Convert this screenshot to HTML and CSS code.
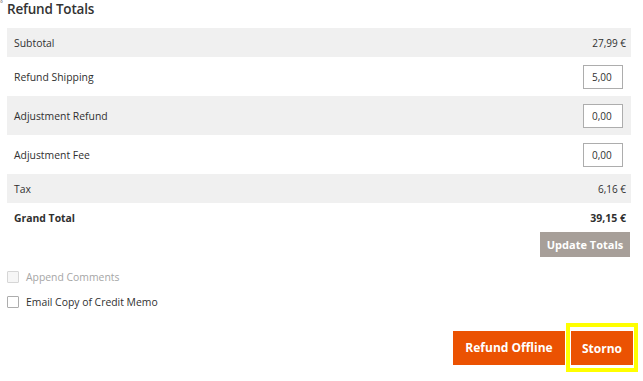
FILE: index.html
```html
<!DOCTYPE html>
<html>
<head>
<meta charset="utf-8">
<link rel="stylesheet" href="styles.css">
</head>
<body>
<div class="page">
  <span class="corner-mark">°</span>
  <h2 class="title">Refund Totals</h2>
  <div class="totals">
    <div class="row shaded short"><span>Subtotal</span><span class="val">27,99 €</span></div>
    <div class="row tall"><span>Refund Shipping</span><input class="amt" value="5,00"></div>
    <div class="row shaded tall"><span>Adjustment Refund</span><input class="amt" value="0,00"></div>
    <div class="row tall"><span>Adjustment Fee</span><input class="amt" value="0,00"></div>
    <div class="row shaded short"><span>Tax</span><span class="val">6,16 €</span></div>
    <div class="row short grand"><span>Grand Total</span><span class="val">39,15 €</span></div>
  </div>
  <div class="update-wrap"><button class="btn-update">Update Totals</button></div>
  <div class="checks">
    <label class="check disabled"><span class="box"></span>Append Comments</label>
    <label class="check"><span class="box"></span>Email Copy of Credit Memo</label>
  </div>
  <div class="actions">
    <button class="btn-primary">Refund Offline</button>
    <span class="highlight"><button class="btn-primary">Storno</button></span>
  </div>
</div>
</body>
</html>
```
FILE: styles.css
```css
* { box-sizing: border-box; }
body {
  margin: 0;
  background: #fff;
  font-family: "Open Sans", "Noto Sans", sans-serif;
  color: #303030;
}
.page {
  position: relative;
  padding-left: 7px;
  width: 631px;
}
.corner-mark {
  position: absolute;
  left: 0;
  top: 0;
  font-size: 7px;
  line-height: 7px;
  color: #555;
}
.title {
  margin: 0;
  font-size: 13.5px;
  line-height: 18px;
  font-weight: 600;
  letter-spacing: -0.2px;
  color: #333;
  height: 28px;
}
.totals { display: flex; flex-direction: column; }
.row {
  display: flex;
  align-items: center;
  justify-content: space-between;
  padding: 0 5px 0 7px;
  font-size: 10.4px;
}
.row.short { height: 29px; }
.row.tall { height: 39px; }
.row.shaded { background: #f0f0f0; }
.row.grand { font-weight: 700; }
.val { font-size: 10px; }
.grand .val { font-size: 10.5px; }
.amt {
  width: 40px;
  height: 24px;
  margin-right: 3px;
  border: 1px solid #adadad;
  background: #fff;
  font-family: inherit;
  font-size: 10px;
  color: #303030;
  padding: 0 0 0 8px;
  outline: none;
}
.update-wrap { display: flex; justify-content: flex-end; }
.btn-update {
  width: 90px;
  height: 25px;
  margin-right: 1px;
  border: none;
  background: #a79f99;
  color: #fff;
  font-family: inherit;
  font-size: 11px;
  font-weight: 700;
  padding: 0;
  white-space: nowrap;
}
.checks {
  display: flex;
  flex-direction: column;
  gap: 12px;
  margin-top: 13px;
}
.check {
  display: flex;
  align-items: center;
  gap: 7px;
  font-size: 10.4px;
  height: 13px;
  color: #303030;
}
.check.disabled { color: #a6a6a6; }
.box {
  width: 12px;
  height: 12px;
  border: 1px solid #adadad;
  border-radius: 1px;
  background: #fff;
}
.check.disabled .box { border-color: #d6d6d6; background: #f6f6f6; }
.actions {
  display: flex;
  justify-content: flex-end;
  align-items: center;
  margin-top: 15px;
  gap: 1px;
}
.btn-primary {
  height: 34px;
  border: 1px solid #eb5202;
  background: #eb5202;
  color: #fff;
  font-family: inherit;
  font-size: 12px;
  font-weight: 700;
  padding: 0;
  white-space: nowrap;
}
.actions > .btn-primary { width: 112px; }
.highlight {
  display: inline-flex;
  border: 4px solid #ffff00;
  padding: 4px 1px 3px 1px;
  margin-right: -7px;
}
.highlight .btn-primary { width: 62px; }
```
